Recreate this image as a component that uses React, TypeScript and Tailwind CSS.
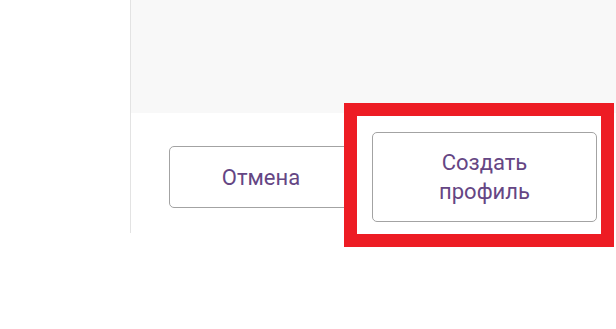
export default function App() {
  return (
    <div
      className="relative h-[329px] w-[616px] overflow-hidden bg-white"
      style={{ fontFamily: 'Roboto, "Liberation Sans", sans-serif' }}
    >
      <div className="flex">
        <div className="w-[130px] shrink-0" />
        <div className="flex h-[233px] w-[486px] shrink-0 flex-col border-l border-[#e3e3e3]">
          <div className="h-[113px] bg-[#f8f8f8]" />
          <div className="flex flex-1 items-start gap-[19px] pl-[38px] pt-[19px]">
            <button className="mt-[14px] flex h-[62px] w-[184px] items-center justify-center rounded-[5px] border border-[#a3a3a3] bg-white text-[22px] text-[#654684]">
              Отмена
            </button>
            <button className="flex h-[90px] w-[225px] items-center justify-center rounded-[5px] border border-[#a3a3a3] bg-white text-[22px] leading-[29px] text-[#654684]">
              <span className="text-center">
                Создать
                <br />
                профиль
              </span>
            </button>
          </div>
        </div>
      </div>

      {/* red annotation frame */}
      <div className="pointer-events-none absolute left-[344px] top-[103px] h-[144px] w-[270px] border-[13px] border-[#ed1c24]" />
    </div>
  )
}
